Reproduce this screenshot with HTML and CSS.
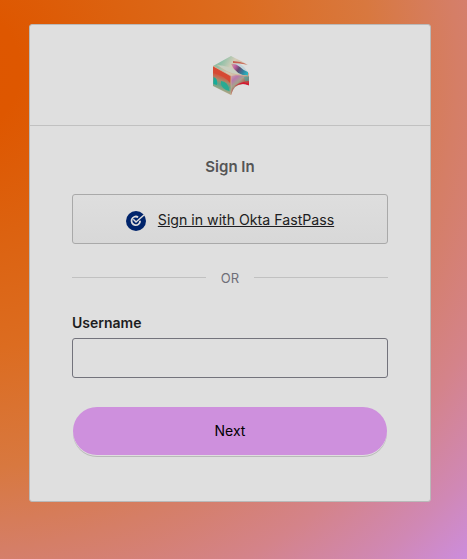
FILE: index.html
```html
<!DOCTYPE html>
<html lang="en">
<head>
<meta charset="utf-8">
<title>Sign In</title>
<link rel="stylesheet" href="styles.css">
</head>
<body>
<main class="card">
  <header class="card-header">
    <svg class="logo" viewBox="0 0 36 40" aria-hidden="true">
      <defs>
        <linearGradient id="top" x1="0" y1="0" x2="1" y2=".35"><stop offset="0" stop-color="#9fb99b"/><stop offset=".3" stop-color="#8fc0a8"/><stop offset=".6" stop-color="#d3cdb8"/><stop offset="1" stop-color="#d4a995"/></linearGradient>
        <linearGradient id="left" gradientUnits="userSpaceOnUse" x1="11" y1="13" x2="4" y2="34"><stop offset="0" stop-color="#d9472d"/><stop offset=".35" stop-color="#d05a41"/><stop offset=".55" stop-color="#a98b6d"/><stop offset=".72" stop-color="#5fa389"/><stop offset="1" stop-color="#b5a684"/></linearGradient>
        <linearGradient id="right" gradientUnits="userSpaceOnUse" x1="20" y1="18" x2="32" y2="32"><stop offset="0" stop-color="#c9a2a8"/><stop offset=".25" stop-color="#b878ad"/><stop offset=".5" stop-color="#a5a28e"/><stop offset=".75" stop-color="#b0584b"/><stop offset="1" stop-color="#d51a32"/></linearGradient>
        <linearGradient id="inner" gradientUnits="userSpaceOnUse" x1="18" y1="8" x2="35" y2="19"><stop offset="0" stop-color="#d0aa9d"/><stop offset=".25" stop-color="#bd5da0"/><stop offset=".45" stop-color="#63486f"/><stop offset=".7" stop-color="#347f9c"/><stop offset="1" stop-color="#28c2c8"/></linearGradient>
        <filter id="soften" x="-10%" y="-10%" width="120%" height="120%"><feGaussianBlur stdDeviation=".45"/></filter>
      </defs>
      <path fill="url(#top)" d="M0 10 18 0 28 5 35 9 24 7Q28 13 36 17V21L18 20Z"/>
      <g filter="url(#soften)">
        <path fill="#c9cfc0" d="M4 9Q15 9 33 19L18 18Z"/>
        <path fill="#c3d6dc" d="M20 8 25 7Q32 10 35 17L29 17Q21 13 20 8Z"/>
        <path fill="url(#inner)" d="M18 8Q22 7 27 11Q31 15 35 16L35 20Q23 19 18 8Z"/>
        <path fill="#c75f50" d="M20 5Q27 5 34 8.5 28 7 20 7Z"/>
      </g>
      <path fill="url(#left)" d="M0 10 18 20V39L0 30Z"/>
      <g filter="url(#soften)">
        <path fill="#17ac9a" d="M.5 21Q5 22 4 29L.5 28Z"/>
        <path fill="#2aaa92" d="M8 25Q15 25 16.5 35L13 34Q7 31 8 25Z"/>
        <path fill="#d64933" d="M0 11 17 20V27Q12 20 0 17Z"/>
      </g>
      <path fill="url(#right)" d="M18 20Q27 18 36 20V29Q22 25 18 39Z"/>
      <path fill="#d31a31" d="M21 31Q25 27 31 26L36 28V29.5Q27 26 21 31Z"/>
      <path fill="#48aaa5" d="M31 21 36 20V25L32 25Z" opacity=".65"/>
      <path class="logo-edge" d="M0 10 18 20 18 39M4 9Q13 17 25 19L36 20"/>
    </svg>
  </header>
  <form class="form">
    <h1 class="title">Sign In</h1>
    <a class="fastpass" href="#">
      <svg class="check" viewBox="0 0 20 20" aria-hidden="true">
        <circle cx="10" cy="10" r="10" fill="#00246b"/>
        <path d="M12.1 6.2A4.3 4.3 0 1 0 14.1 9.7" fill="none" stroke="#dcdcdc" stroke-width="1.8"/>
        <path d="M7.3 8.3 10 11 18 4" fill="none" stroke="#dcdcdc" stroke-width="1.5"/>
      </svg>
      <span class="fastpass-label">Sign in with Okta FastPass</span>
    </a>
    <div class="divider">OR</div>
    <label class="label" for="username">Username</label>
    <input class="input" id="username" type="text">
    <button class="next" type="button">Next</button>
  </form>
</main>
</body>
</html>
```

FILE: styles.css
```css
* { box-sizing: border-box; }

body {
  margin: 0;
  height: 559px;
  padding: 24px 36px 0 29px;
  overflow: hidden;
  font-family: Inter, "Liberation Sans", sans-serif;
  font-size: 14px;
  color: #1d1d21;
  background: radial-gradient(ellipse 780px 740px at -50px 70px, #de5600 0, #de5700 9%, #dc6210 23%, #dc6c20 38%, #d8783f 54%, #d57e66 65%, #d4838a 76%, #d088b5 86%, #cc8ddf 94%);
}

.card {
  height: 478px;
  background: #dfdfdf;
  border: 1px solid #b9b9b9;
  border-radius: 3px;
}

.card-header {
  display: flex;
  justify-content: center;
  height: 101px;
  padding: 31px 0 0 1px;
  border-bottom: 1px solid #c1c1c1;
}

.logo { width: 36px; height: 40px; }
.logo-edge { fill: none; stroke: #d2b397; stroke-width: .7; }

.form {
  display: flex;
  flex-direction: column;
  padding: 30px 42px 0;
}

.title {
  margin: 0;
  height: 38px;
  font-size: 15px;
  font-weight: 600;
  line-height: 22px;
  text-align: center;
  color: #555;
}

.fastpass {
  display: flex;
  align-items: center;
  justify-content: center;
  gap: 12px;
  height: 50px;
  border: 1px solid #a9a9a9;
  border-radius: 3px;
  background: linear-gradient(#dedede, #d8d8d8);
  color: #1d1d21;
}

.check { width: 20px; height: 20px; margin-top: 3px; }
.fastpass-label { font-size: 14.15px; }

.divider {
  display: flex;
  align-items: center;
  gap: 15px;
  height: 20px;
  margin-top: 24px;
  font-size: 13px;
  color: #6e6e78;
}

.divider::before,
.divider::after {
  content: "";
  flex: 1;
  height: 1px;
  margin-bottom: 1px;
  background: #c1c1c1;
}

.label {
  margin-top: 25px;
  height: 25px;
  line-height: 20px;
  font-weight: 600;
}

.input {
  height: 40px;
  border: 1px solid #73737c;
  border-radius: 3px;
  background: #dfdfdf;
}

.next {
  height: 48px;
  margin: 29px 1px 0;
  padding: 0 0 2px;
  border: 0;
  border-radius: 24px;
  background: #ce90dd;
  box-shadow: 0 1px 0 #dfdfdf, 0 2px 0 #b9b9b9;
  font: inherit;
  color: #000;
}
```
